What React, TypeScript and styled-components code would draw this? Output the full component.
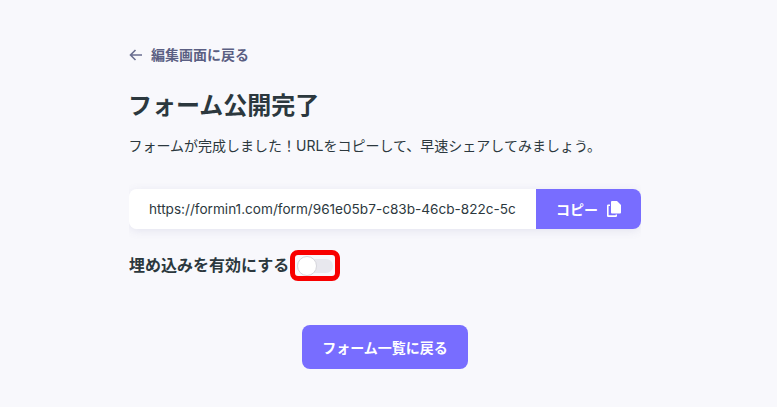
import React from 'react';
import styled, { createGlobalStyle } from 'styled-components';

const GlobalStyle = createGlobalStyle`
  html, body {
    margin: 0;
    background: #f8f8fc;
  }
  body {
    font-family: Inter, 'Noto Sans CJK JP', sans-serif;
  }
`;

const Page = styled.div`
  width: 512px;
  height: 407px;
  margin-left: 129px;
  padding-top: 46px;
  box-sizing: border-box;
  overflow: hidden;
`;

const BackLink = styled.a`
  display: flex;
  align-items: center;
  gap: 8px;
  height: 18px;
  color: #5b5f83;
  font-size: 14px;
  font-weight: 700;
  line-height: 18px;
`;

const Title = styled.h1`
  margin: 24px 0 0;
  color: #2c383e;
  font-size: 24px;
  font-weight: 700;
  line-height: 36px;
  text-indent: -1px;
`;

const Lead = styled.p`
  margin: 12px 0 0;
  color: #2c383e;
  font-size: 14px;
  line-height: 20px;
  text-indent: -0.5px;
`;

const UrlRow = styled.div`
  display: flex;
  height: 40px;
  margin-top: 33px;
  border-radius: 8px;
  box-shadow: 0 2px 10px rgba(90, 90, 150, 0.12);
  overflow: hidden;
`;

const UrlField = styled.div`
  flex: 1;
  min-width: 0;
  padding: 0 20px;
  background: #fff;
`;

const UrlText = styled.div`
  color: #2c383e;
  font-size: 13.6px;
  line-height: 40px;
  white-space: nowrap;
  overflow: hidden;
`;

const CopyButton = styled.button`
  display: flex;
  align-items: center;
  justify-content: center;
  gap: 9px;
  width: 105px;
  padding: 0;
  border: none;
  background: #786dff;
  color: #fff;
  font: inherit;
  font-size: 14px;
  font-weight: 700;
`;

const EmbedRow = styled.div`
  display: flex;
  align-items: center;
  gap: 1px;
  margin-top: 21px;
`;

const EmbedLabel = styled.span`
  color: #2c383e;
  font-size: 16px;
  font-weight: 700;
  line-height: 31px;
`;

const Highlight = styled.div`
  display: flex;
  align-items: center;
  justify-content: center;
  width: 50px;
  height: 31px;
  box-sizing: border-box;
  border: 5px solid #f80000;
  border-radius: 8px;
`;

const Track = styled.div`
  position: relative;
  width: 36px;
  height: 14px;
  border-radius: 7px;
  background: #e8e8ee;
`;

const Knob = styled.div`
  position: absolute;
  top: -3px;
  left: 0;
  width: 20px;
  height: 20px;
  box-sizing: border-box;
  border: 1px solid #d6d6dc;
  border-radius: 50%;
  background: #fff;
`;

const Footer = styled.div`
  display: flex;
  justify-content: center;
  margin-top: 44px;
`;

const ListButton = styled.button`
  width: 166px;
  height: 44px;
  padding: 0;
  border: none;
  border-radius: 8px;
  background: #786dff;
  color: #fff;
  font: inherit;
  font-size: 14px;
  font-weight: 700;
`;

const App: React.FC = () => (
  <>
    <GlobalStyle />
    <Page>
      <BackLink>
        <svg width="14" height="14" viewBox="0 0 14 14" fill="none" stroke="#6a6e90" strokeWidth="1.6">
          <path d="M13 7H1.5M6.5 2L1.5 7l5 5" />
        </svg>
        編集画面に戻る
      </BackLink>
      <Title>フォーム公開完了</Title>
      <Lead>フォームが完成しました！URLをコピーして、早速シェアしてみましょう。</Lead>
      <UrlRow>
        <UrlField>
          <UrlText>https://formin1.com/form/961e05b7-c83b-46cb-822c-5c</UrlText>
        </UrlField>
        <CopyButton>
          コピー
          <svg width="14" height="16" viewBox="0 0 14 16" fill="#fff">
            <path d="M5 0h5l4 4v7.5a1 1 0 0 1-1 1H5a1 1 0 0 1-1-1V1a1 1 0 0 1 1-1z" />
            <path d="M1.2 3.5H3v1.4H1.6v9.4h7v-.8H10v1.3A1.2 1.2 0 0 1 8.8 16H1.2A1.2 1.2 0 0 1 0 14.8V4.700a1.2 1.2 0 0 1 1.2-1.2z" />
          </svg>
        </CopyButton>
      </UrlRow>
      <EmbedRow>
        <EmbedLabel>埋め込みを有効にする</EmbedLabel>
        <Highlight>
          <Track>
            <Knob />
          </Track>
        </Highlight>
      </EmbedRow>
      <Footer>
        <ListButton>フォーム一覧に戻る</ListButton>
      </Footer>
    </Page>
  </>
);

export default App;
